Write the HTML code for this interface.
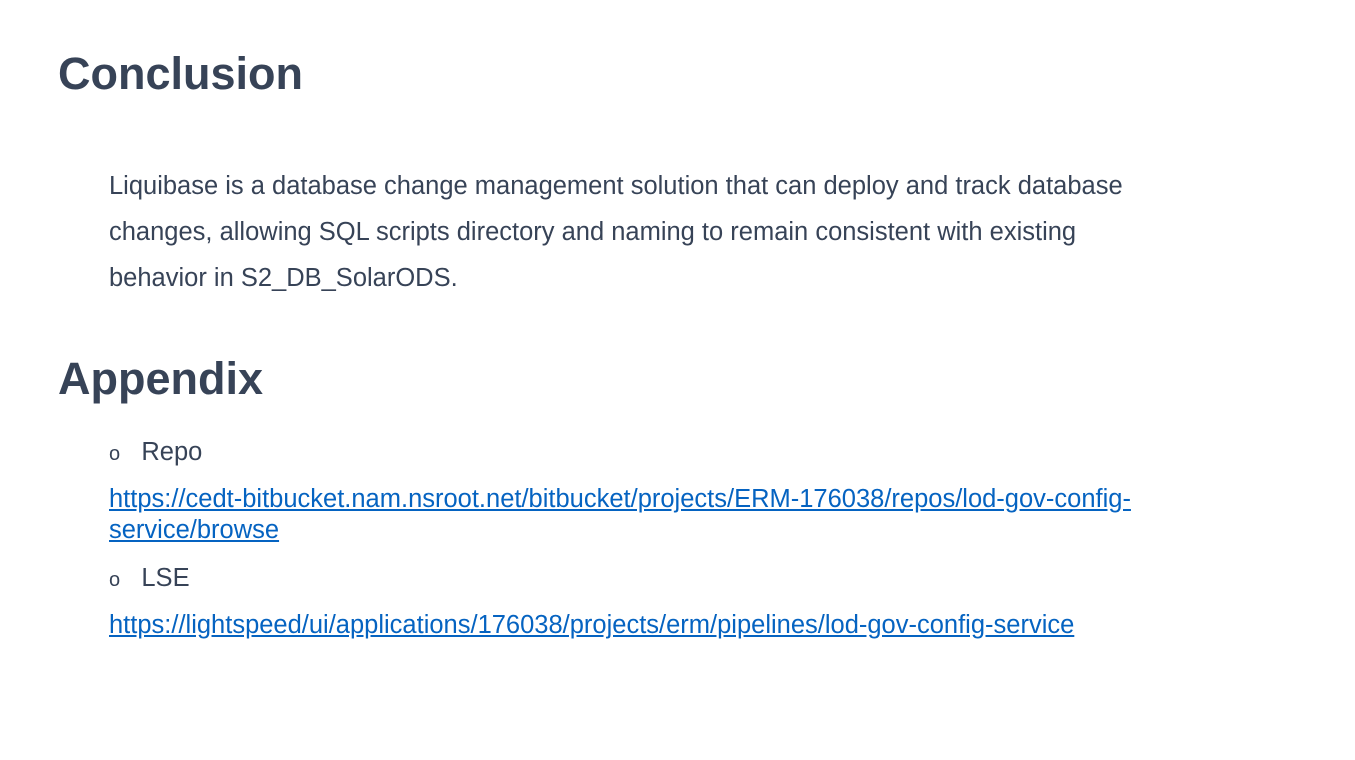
<!DOCTYPE html>
<html><head><style>
body{margin:0;width:1355px;height:760px;background:#fff;font-family:"Liberation Sans",sans-serif;color:#374357;position:relative;overflow:hidden}
.a{position:absolute;white-space:nowrap}
h1{margin:0;font-size:45px;font-weight:bold;color:#374357}
.p{font-size:25.5px}
a{color:#0563c1;text-decoration:underline;font-size:25.5px}
</style></head><body>
<div class="a" style="left:58px;top:48px"><h1>Conclusion</h1></div>
<div class="a p" style="left:109px;top:172px">Liquibase is a database change management solution that can deploy and track database</div>
<div class="a p" style="left:109px;top:218px">changes, allowing SQL scripts directory and naming to remain consistent with existing</div>
<div class="a p" style="left:109px;top:264px">behavior in S2_DB_SolarODS.</div>
<div class="a" style="left:58px;top:353px"><h1>Appendix</h1></div>
<div class="a p" style="left:109px;top:438px"><span style="font-size:20px">o</span>&nbsp;&nbsp;&nbsp;Repo</div>
<div class="a" style="left:109px;top:485px"><a>https://cedt-bitbucket.nam.nsroot.net/bitbucket/projects/ERM-176038/repos/lod-gov-config-</a></div>
<div class="a" style="left:109px;top:516px"><a>service/browse</a></div>
<div class="a p" style="left:109px;top:564px"><span style="font-size:20px">o</span>&nbsp;&nbsp;&nbsp;LSE</div>
<div class="a" style="left:109px;top:611px"><a>https://lightspeed/ui/applications/176038/projects/erm/pipelines/lod-gov-config-service</a></div>
</body></html>
